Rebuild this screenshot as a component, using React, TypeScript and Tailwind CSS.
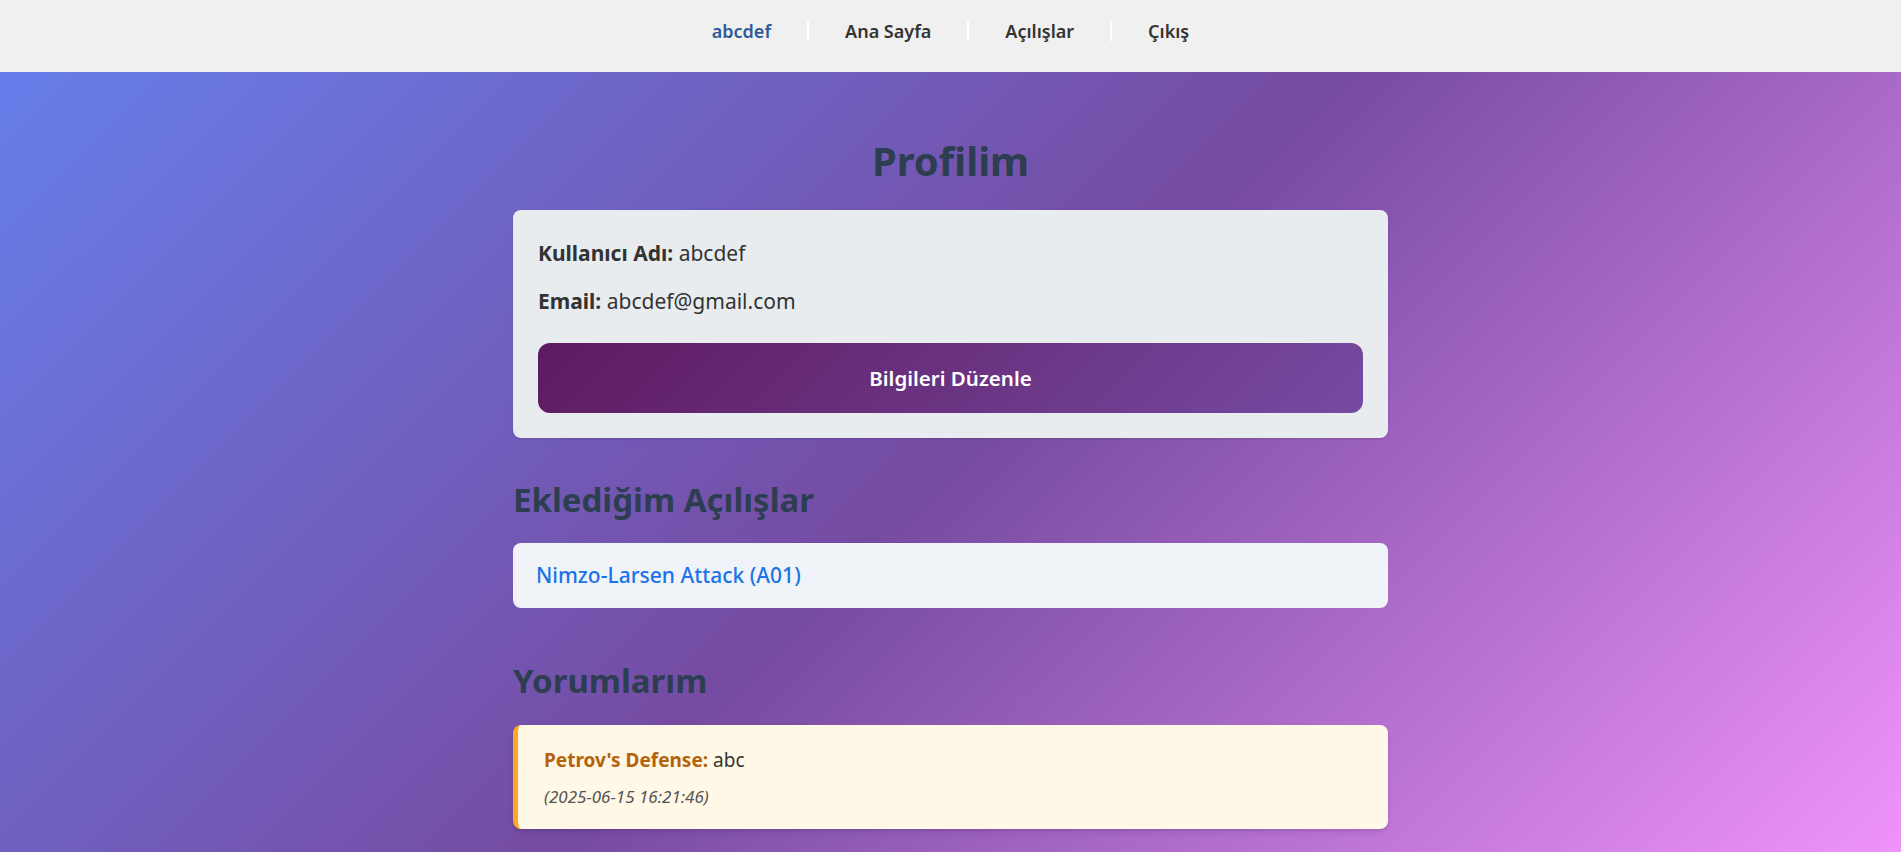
const font = { fontFamily: '"Noto Sans", "Open Sans", sans-serif' }

function NavBar() {
  const links = ['Ana Sayfa', 'Açılışlar', 'Çıkış']
  return (
    <nav className="flex h-[72px] items-center justify-center bg-[#f0f0f0] pb-[10px]">
      <span className="px-[36px] text-[18px] font-semibold text-[#2d5b99]">abcdef</span>
      {links.map((l) => (
        <div key={l} className="flex items-center">
          <span className="h-[20px] w-[2px] bg-white" />
          <span className="px-[36px] text-[18px] font-semibold text-[#333333]">{l}</span>
        </div>
      ))}
    </nav>
  )
}

function ProfileCard() {
  return (
    <div className="rounded-[8px] bg-[#e9ecef] p-[25px] shadow-sm">
      <p className="text-[21px] leading-[36px] text-[#333333]">
        <strong className="font-bold">Kullanıcı Adı:</strong> abcdef
      </p>
      <p className="mt-[12px] text-[21px] leading-[36px] text-[#333333]">
        <strong className="font-bold">Email:</strong> abcdef@gmail.com
      </p>
      <button className="mt-[24px] flex h-[70px] w-full items-center justify-center rounded-[12px] bg-[linear-gradient(135deg,#5e1a60_0%,#764ba2_100%)] text-[20.5px] font-semibold text-white">
        Bilgileri Düzenle
      </button>
    </div>
  )
}

export default function App() {
  return (
    <div style={font}>
      <NavBar />
      <main className="min-h-[780px] bg-[linear-gradient(135deg,#667eea_0%,#764ba2_50%,#f093fb_100%)] pt-[65px] pb-[20px]">
        <div className="mx-auto w-[875px]">
          <h1 className="mb-[25px] text-center text-[40px] font-bold leading-[48px] text-[#2c3e50]">
            Profilim
          </h1>
          <ProfileCard />

          <h2 className="mt-[42px] mb-[23px] text-[33px] font-bold leading-[40px] text-[#2c3e50]">
            Eklediğim Açılışlar
          </h2>
          <div className="flex h-[65px] items-center rounded-[8px] bg-[#f0f3f8] px-[23px]">
            <a className="text-[21px] font-medium text-[#1a73e8]">Nimzo-Larsen Attack (A01)</a>
          </div>

          <h2 className="mt-[53px] mb-[24px] text-[33px] font-bold leading-[40px] text-[#2c3e50]">
            Yorumlarım
          </h2>
          <div className="rounded-[8px] border-l-[5px] border-[#ffa726] bg-[#fff8e6] pt-[22px] pr-[25px] pb-[20px] pl-[26px] shadow-md">
            <p className="text-[19px] leading-[27px] text-[#333333]">
              <strong className="font-bold text-[#b5620a]">Petrov's Defense:</strong> abc
            </p>
            <p className="mt-[11px] text-[17px] italic leading-[24px] text-[#555555]">
              (2025-06-15 16:21:46)
            </p>
          </div>
        </div>
      </main>
    </div>
  )
}
